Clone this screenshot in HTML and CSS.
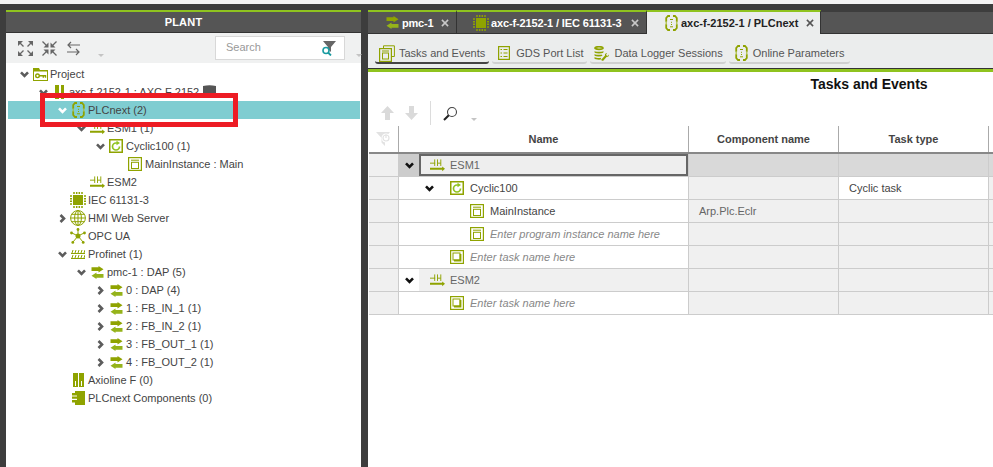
FILE: index.html
```html
<!DOCTYPE html>
<html lang="en">
<head>
<meta charset="utf-8">
<title>PLANT</title>
<link rel="stylesheet" href="styles.css">
</head>
<body>
<svg class="defs" aria-hidden="true">
  <defs>
    <symbol id="i-chev" viewBox="0 0 10 8"><path d="M1 1.500 5 5.500 9 1.500" fill="none" stroke="currentColor" stroke-width="3"/></symbol>
    <symbol id="i-right" viewBox="0 0 7 9"><path d="M1.500 1 5 4.500 1.500 8" fill="none" stroke="currentColor" stroke-width="2.600"/></symbol>
    <symbol id="i-project" viewBox="0 0 15 13"><path d="M0 0H6L7 2H15V13H0Z" fill="#8fa300"/><rect x="1" y="3.500" width="13" height="8.500" fill="#fff"/><circle cx="4.500" cy="7.800" r="1.800" fill="none" stroke="#8fa300" stroke-width="1.400"/><path d="M6 7.800H12.500V9.800M10.300 7.800V9.800" fill="none" stroke="#8fa300" stroke-width="1.400"/></symbol>
    <symbol id="i-rail" viewBox="0 0 9 14"><path d="M0 0H4V14H0ZM6 0H9.500V14H6Z" fill="#8fa300"/></symbol>
    <symbol id="i-device" viewBox="0 0 13 15"><path d="M0 1Q6.500 -.5 13 1V11Q6.500 15 0 11Z" fill="#555"/></symbol>
    <symbol id="i-plc" viewBox="0 0 13 16"><path d="M5 1H3L1.200 3V6.800M1.200 9.200V13L3 15H5M8 1H10L11.800 3V6.800M11.800 9.200V13L10 15H8" fill="none" stroke="#8fa300" stroke-width="1.800"/><path d="M1.200 6.500V9.500M11.800 6.500V9.500" stroke="#a9bb3a" stroke-width="1.200"/><path d="M5 4.500H8M6.500 6.800V7.800M6.500 9V10M5 11.800H8" fill="none" stroke="#8fa300" stroke-width="1"/></symbol>
    <symbol id="i-esm" viewBox="0 0 16 13"><path d="M0 4H5.500M8 4H11.500M5 0V7M8 0V7M11.500 0V7" fill="none" stroke="#8fa300" stroke-width="1"/><path d="M0 9H13V7.500L16 10 13 12.500V11H0Z" fill="#8fa300"/></symbol>
    <symbol id="i-cyclic" viewBox="0 0 14 14"><rect x=".75" y=".75" width="12.500" height="12.500" fill="#fff" stroke="#8fa300" stroke-width="1.500"/><path d="M10.500 7.500A3.500 3.500 0 1 1 7 4H8" fill="none" stroke="#8fc31f" stroke-width="1.700"/><path d="M7.500 1.800 11 4 7.500 6.300Z" fill="#8fc31f"/></symbol>
    <symbol id="i-prog" viewBox="0 0 14 14"><rect x=".6" y=".6" width="12.800" height="12.800" fill="none" stroke="#8fa300" stroke-width="1.200"/><path d="M3 3.200H11" stroke="#8fa300" stroke-width="1"/><rect x="3.500" y="5.300" width="7" height="6.200" fill="none" stroke="#8fa300" stroke-width="1"/></symbol>
    <symbol id="i-task" viewBox="0 0 14 14"><rect x=".6" y=".6" width="12.800" height="12.800" fill="none" stroke="#8fa300" stroke-width="1.200"/><rect x="3" y="3" width="7" height="7" fill="none" stroke="#8fa300" stroke-width="1"/><path d="M4 10.500H10.500V4" fill="none" stroke="#8fa300" stroke-width="1.800"/></symbol>
    <symbol id="i-chip" viewBox="0 0 16 16"><rect x="3" y="3" width="10" height="10" fill="#8fa300"/><path d="M4 0V2M6.700 0V2M9.300 0V2M12 0V2M4 14V16M6.700 14V16M9.300 14V16M12 14V16M0 4H2M0 6.700H2M0 9.300H2M0 12H2M14 4H16M14 6.700H16M14 9.300H16M14 12H16" stroke="#8fa300" stroke-width="1.500"/></symbol>
    <symbol id="i-globe" viewBox="0 0 16 16"><g fill="none" stroke="#8fa300" stroke-width="1"><circle cx="8" cy="8" r="7.400"/><ellipse cx="8" cy="8" rx="3.400" ry="7.400"/><path d="M8 .6V15.400M.6 8H15.400M1.800 4.300H14.200M1.800 11.700H14.200"/></g></symbol>
    <symbol id="i-opc" viewBox="0 0 16 16"><path d="M8 8 8 2M8 8 2 5M8 8 14 5M8 8 3 14M8 8 13 14" stroke="#8fa300" stroke-width="1"/><g fill="#8fa300"><circle cx="8" cy="8" r="2.500"/><circle cx="8" cy="1.500" r="1.400"/><circle cx="1.500" cy="5" r="1.400"/><circle cx="14.500" cy="5" r="1.400"/><circle cx="2.800" cy="14.400" r="1.400"/><circle cx="13.200" cy="14.400" r="1.400"/></g></symbol>
    <symbol id="i-prof" viewBox="0 0 14 9"><path d="M0 3.500H14M0 8.500H14" stroke="#8fa300" stroke-width="1"/><path d="M2 0 1 3M5 0 4 3M8 0 7 3M11 0 10 3M14 0 13 3M2 5 1 8M5 5 4 8M8 5 7 8M11 5 10 8M14 5 13 8" stroke="#8fa300" stroke-width="1"/></symbol>
    <symbol id="i-swap" viewBox="0 0 13 13"><path d="M.5 1.200H7.500V0L12.500 3.200 7.500 6.400V5H.5Z" fill="#8fa300"/><path d="M12.500 8H5.500V6.600L.5 9.800 5.500 13V11.800H12.500Z" fill="#95b31a"/></symbol>
    <symbol id="i-axio" viewBox="0 0 11 14"><path d="M0 0H5V14H0ZM6 0H11V14H6Z" fill="#8fa300"/><path d="M2.500 8V13M8.500 8V13" stroke="#fff" stroke-width="1"/></symbol>
    <symbol id="i-comp" viewBox="0 0 13 14"><path d="M3 0H13V14H3V11.500H0V9H5V7.700H0V5.500H5V4.500H0V2H3Z" fill="#8fa300"/></symbol>
    <symbol id="i-expand" viewBox="0 0 15 15"><path d="M0 0H5L0 5ZM15 0V5L10 0ZM0 15V10L5 15ZM15 15H10L15 10Z" fill="#666"/><path d="M1.500 1.500 5.500 5.500M13.500 1.500 9.500 5.500M1.500 13.500 5.500 9.500M13.500 13.500 9.500 9.500" stroke="#666" stroke-width="1.300"/></symbol>
    <symbol id="i-collapse" viewBox="0 0 15 15"><path d="M6.500 6.500H1.500L6.500 1.500ZM8.500 6.500V1.500L13.500 6.500ZM6.500 8.500V13.500L1.500 8.500ZM8.500 8.500H13.500L8.500 13.500Z" fill="#666"/><path d="M.5 .5 5 5M14.500 .5 10 5M.5 14.500 5 10M14.500 14.500 10 10" stroke="#666" stroke-width="1.300"/></symbol>
    <symbol id="i-swapgray" viewBox="0 0 15 15"><path d="M14 4H2M5 1 2 4 5 7M1 11H13M10 8 13 11 10 14" fill="none" stroke="#666" stroke-width="1.200"/></symbol>
    <symbol id="i-filter" viewBox="0 0 15 15"><path d="M2 0H15L10 6V11L7 8V6Z" fill="#666"/><circle cx="5" cy="9.500" r="3" fill="#fff" stroke="#1a9ba1" stroke-width="1.600"/><path d="M7 11.500 10 14.500" stroke="#1a9ba1" stroke-width="1.800"/></symbol>
    <symbol id="i-x" viewBox="0 0 9 9"><path d="M1 1 8 8M8 1 1 8" stroke="currentColor" stroke-width="1.700"/></symbol>
    <symbol id="i-tasks" viewBox="0 0 16 17"><path d="M4.500 3.500V.8H15.400V11.500H12.500" fill="none" stroke="#8fa300" stroke-width="1"/><rect x=".6" y="3.600" width="11.800" height="12.800" fill="#ebeded" stroke="#8fa300" stroke-width="1.200"/><path d="M3 6H10" stroke="#8fa300" stroke-width="1"/><rect x="3.500" y="8" width="6" height="6" fill="none" stroke="#8fa300" stroke-width="1"/></symbol>
    <symbol id="i-list" viewBox="0 0 12 14"><rect x=".6" y=".6" width="10.800" height="12.800" fill="none" stroke="#8fa300" stroke-width="1.200"/><path d="M2.500 3.500H4M5.500 3.500H9.500M2.500 7H4M5.500 7H9.500M2.500 10.500H4M5.500 10.500H9.500" stroke="#8fa300" stroke-width="1.200"/></symbol>
    <symbol id="i-data" viewBox="0 0 15 15"><g fill="none" stroke="#8fa300" stroke-width="1.700"><ellipse cx="5" cy="2" rx="4" ry="1.300"/><path d="M1 5.500C1 7 9 7 9 5.500M1 8.500C1 10 7 10 8 9M1 11.500C1 13 6 13 7 12.500"/></g><path d="M7 14 11 9.500Q10.500 7.500 13 7L12 9 13.500 10 15 8.500Q15 11 12.500 11L9 15Z" fill="#8fa300"/></symbol>
    <symbol id="i-up" viewBox="0 0 13 14"><path d="M6.500 0 13 7H9V14H4V7H0Z" fill="#dadada"/></symbol>
    <symbol id="i-down" viewBox="0 0 13 14"><path d="M6.500 14 13 7H9V0H4V7H0Z" fill="#dadada"/></symbol>
    <symbol id="i-mag" viewBox="0 0 15 15"><circle cx="9" cy="6" r="4.500" fill="none" stroke="#444" stroke-width="1.100"/><path d="M5.800 9.200 1 14" stroke="#222" stroke-width="2"/></symbol>
    <symbol id="i-filteroff" viewBox="0 0 15 15"><path d="M0 0H14L9 6V14L5.500 10.500V6Z" fill="#e2e2e2"/><circle cx="10" cy="6" r="4.500" fill="#fff"/><circle cx="10" cy="6" r="3" fill="none" stroke="#e2e2e2" stroke-width="1.200"/><path d="M10 2.500V6" stroke="#e2e2e2" stroke-width="1.200"/></symbol>
  </defs>
</svg>

<div class="topstrip"></div>
<div class="shell">
  <section class="plant">
    <h2 class="plant-head">PLANT</h2>
    <div class="plant-tools">
      <svg class="tool"><use href="#i-expand"/></svg>
      <svg class="tool"><use href="#i-collapse"/></svg>
      <svg class="tool"><use href="#i-swapgray"/></svg>
      <span class="caret caret-tools"></span>
      <div class="search"><span>Search</span><svg class="search-icon"><use href="#i-filter"/></svg></div>
      <span class="caret caret-end"></span>
    </div>
    <div class="tree">
      <div class="node l0"><svg class="chev"><use href="#i-chev"/></svg><span class="ic"><svg class="w15 h13"><use href="#i-project"/></svg></span><span>Project</span></div>
      <div class="node l1"><svg class="chev"><use href="#i-chev"/></svg><span class="ic"><svg class="w9 h14"><use href="#i-rail"/></svg></span><span>axc-f-2152-1 : AXC F 2152</span><svg class="device"><use href="#i-device"/></svg></div>
      <div class="node l2 selected"><svg class="chev"><use href="#i-chev"/></svg><span class="ic"><svg class="w13 h16"><use href="#i-plc"/></svg></span><span>PLCnext (2)</span></div>
      <div class="node l3"><svg class="chev"><use href="#i-chev"/></svg><span class="ic"><svg class="w15 h13"><use href="#i-esm"/></svg></span><span>ESM1 (1)</span></div>
      <div class="node l4"><svg class="chev"><use href="#i-chev"/></svg><span class="ic"><svg class="w14 h14"><use href="#i-cyclic"/></svg></span><span>Cyclic100 (1)</span></div>
      <div class="node l5"><span class="nochev"></span><span class="ic"><svg class="w14 h14"><use href="#i-prog"/></svg></span><span>MainInstance : Main</span></div>
      <div class="node l3"><span class="nochev"></span><span class="ic"><svg class="w15 h13"><use href="#i-esm"/></svg></span><span>ESM2</span></div>
      <div class="node l2"><span class="nochev"></span><span class="ic"><svg class="w16 h16"><use href="#i-chip"/></svg></span><span>IEC 61131-3</span></div>
      <div class="node l2"><svg class="chev chev-r"><use href="#i-right"/></svg><span class="ic"><svg class="w16 h16"><use href="#i-globe"/></svg></span><span>HMI Web Server</span></div>
      <div class="node l2"><span class="nochev"></span><span class="ic"><svg class="w16 h16"><use href="#i-opc"/></svg></span><span>OPC UA</span></div>
      <div class="node l2"><svg class="chev"><use href="#i-chev"/></svg><span class="ic"><svg class="w14 h9"><use href="#i-prof"/></svg></span><span>Profinet (1)</span></div>
      <div class="node l3"><svg class="chev"><use href="#i-chev"/></svg><span class="ic"><svg class="w13 h13"><use href="#i-swap"/></svg></span><span>pmc-1 : DAP (5)</span></div>
      <div class="node l4"><svg class="chev chev-r"><use href="#i-right"/></svg><span class="ic"><svg class="w13 h13"><use href="#i-swap"/></svg></span><span>0 : DAP (4)</span></div>
      <div class="node l4"><svg class="chev chev-r"><use href="#i-right"/></svg><span class="ic"><svg class="w13 h13"><use href="#i-swap"/></svg></span><span>1 : FB_IN_1 (1)</span></div>
      <div class="node l4"><svg class="chev chev-r"><use href="#i-right"/></svg><span class="ic"><svg class="w13 h13"><use href="#i-swap"/></svg></span><span>2 : FB_IN_2 (1)</span></div>
      <div class="node l4"><svg class="chev chev-r"><use href="#i-right"/></svg><span class="ic"><svg class="w13 h13"><use href="#i-swap"/></svg></span><span>3 : FB_OUT_1 (1)</span></div>
      <div class="node l4"><svg class="chev chev-r"><use href="#i-right"/></svg><span class="ic"><svg class="w13 h13"><use href="#i-swap"/></svg></span><span>4 : FB_OUT_2 (1)</span></div>
      <div class="node l2"><span class="nochev"></span><span class="ic"><svg class="w11 h14"><use href="#i-axio"/></svg></span><span>Axioline F (0)</span></div>
      <div class="node l2"><span class="nochev"></span><span class="ic"><svg class="w13 h14"><use href="#i-comp"/></svg></span><span>PLCnext Components (0)</span></div>
    </div>
    <div class="redbox"></div>
  </section>

  <section class="main">
    <div class="tabs">
      <div class="tab t1"><svg class="w13 h13"><use href="#i-swap"/></svg><span class="tab-label">pmc-1</span><svg class="tab-x"><use href="#i-x"/></svg></div>
      <div class="tab t2"><svg class="w16 h16"><use href="#i-chip"/></svg><span class="tab-label">axc-f-2152-1 / IEC 61131-3</span><svg class="tab-x"><use href="#i-x"/></svg></div>
      <div class="tab t3 active"><svg class="w13 h16"><use href="#i-plc"/></svg><span class="tab-label">axc-f-2152-1 / PLCnext</span><svg class="tab-x"><use href="#i-x"/></svg></div>
      <div class="tab-fill"></div>
    </div>
    <nav class="subtabs">
      <div class="subtab s1 current"><svg class="w16 h17"><use href="#i-tasks"/></svg><span>Tasks and Events</span></div>
      <div class="subtab s2"><svg class="w12 h14"><use href="#i-list"/></svg><span>GDS Port List</span></div>
      <div class="subtab s3"><svg class="w15 h15"><use href="#i-data"/></svg><span>Data Logger Sessions</span></div>
      <div class="subtab s4"><svg class="w13 h16"><use href="#i-plc"/></svg><span>Online Parameters</span></div>
    </nav>
    <div class="content">
      <h1 class="title">Tasks and Events</h1>
      <div class="grid-tools">
        <svg class="w13 h14"><use href="#i-up"/></svg>
        <svg class="w13 h14"><use href="#i-down"/></svg>
        <span class="sep"></span>
        <svg class="w15 h15"><use href="#i-mag"/></svg>
        <span class="caret caret-mag"></span>
      </div>
      <div class="grid">
        <div class="row head">
          <div class="cell gutter"><svg class="w15 h15"><use href="#i-filteroff"/></svg></div>
          <div class="cell name"><span>Name</span></div>
          <div class="cell comp"><span>Component name</span></div>
          <div class="cell type"><span>Task type</span></div>
          <div class="cell rest"></div>
        </div>
        <div class="row group focus">
          <div class="cell gutter"></div>
          <div class="cell name"><span class="gchev"><svg class="chev-b"><use href="#i-chev"/></svg></span><div class="focusbox"><svg class="w15 h13"><use href="#i-esm"/></svg><span>ESM1</span></div></div>
          <div class="cell comp"></div><div class="cell type"></div><div class="cell rest"></div>
        </div>
        <div class="row">
          <div class="cell gutter"></div>
          <div class="cell name lv1"><span class="gchev"><svg class="chev-b"><use href="#i-chev"/></svg></span><svg class="w14 h14 gic"><use href="#i-cyclic"/></svg><span>Cyclic100</span></div>
          <div class="cell comp"></div><div class="cell type white"><span>Cyclic task</span></div><div class="cell rest"></div>
        </div>
        <div class="row">
          <div class="cell gutter"></div>
          <div class="cell name lv2"><span class="gchev"></span><svg class="w14 h14 gic"><use href="#i-prog"/></svg><span>MainInstance</span></div>
          <div class="cell comp muted"><span>Arp.Plc.Eclr</span></div><div class="cell type"></div><div class="cell rest"></div>
        </div>
        <div class="row">
          <div class="cell gutter"></div>
          <div class="cell name lv2"><span class="gchev"></span><svg class="w14 h14 gic"><use href="#i-prog"/></svg><em>Enter program instance name here</em></div>
          <div class="cell comp"></div><div class="cell type"></div><div class="cell rest"></div>
        </div>
        <div class="row">
          <div class="cell gutter"></div>
          <div class="cell name lv1"><span class="gchev"></span><svg class="w14 h14 gic"><use href="#i-task"/></svg><em>Enter task name here</em></div>
          <div class="cell comp"></div><div class="cell type"></div><div class="cell rest"></div>
        </div>
        <div class="row group2">
          <div class="cell gutter"></div>
          <div class="cell name"><span class="gchev white"><svg class="chev-b"><use href="#i-chev"/></svg></span><div class="plainbox"><svg class="w15 h13"><use href="#i-esm"/></svg><span>ESM2</span></div></div>
          <div class="cell comp"></div><div class="cell type"></div><div class="cell rest"></div>
        </div>
        <div class="row">
          <div class="cell gutter"></div>
          <div class="cell name lv1"><span class="gchev"></span><svg class="w14 h14 gic"><use href="#i-task"/></svg><em>Enter task name here</em></div>
          <div class="cell comp"></div><div class="cell type"></div><div class="cell rest"></div>
        </div>
      </div>
    </div>
  </section>
</div>
</body>
</html>
```
FILE: styles.css
```css
* { box-sizing: border-box; }
html, body { margin: 0; height: 100%; overflow: hidden; }
body { font-family: "Liberation Sans", Arial, sans-serif; font-size: 11px; color: #444; background: #3d3d3d; }
svg { display: block; flex: none; }
.defs { position: absolute; width: 0; height: 0; }

.w9 { width: 9px; } .w11 { width: 11px; } .w12 { width: 12px; } .w13 { width: 13px; } .w14 { width: 14px; } .w15 { width: 15px; } .w16 { width: 16px; }
.h9 { height: 9px; } .h12 { height: 12px; } .h13 { height: 13px; } .h14 { height: 14px; } .h15 { height: 15px; } .h16 { height: 16px; } .h17 { height: 17px; }

.topstrip { height: 4px; background: #f4f4f4; }
.shell { display: flex; gap: 7px; height: 463px; padding: 6px 0 0 6px; }

/* Plant panel */
.plant { position: relative; width: 355px; flex: none; background: #fff; display: flex; flex-direction: column; border-top: 2px solid #8fc31f; }
.plant-head { margin: 0; height: 21px; background: #555; border-bottom: 1px solid #333; color: #fff; font-size: 11px; font-weight: bold; line-height: 20px; text-align: center; letter-spacing: .2px; }
.plant-tools { position: relative; height: 30px; background: #f0f1f1; display: flex; align-items: center; padding: 0 0 0 12px; gap: 9px; flex: none; }
.tool { width: 15px; height: 15px; }
.caret { position: absolute; width: 0; height: 0; border-left: 3px solid transparent; border-right: 3px solid transparent; border-top: 3px solid #c4c4c4; }
.caret-tools { left: 92px; top: 21px; }
.caret-end { left: 354px; top: 21px; margin-left: -4px; }
.caret-mag { left: 103px; top: 18px; }
.search { position: absolute; left: 209px; top: 3px; width: 130px; height: 24px; background: #fff; border: 1px solid #d8d8d8; display: flex; align-items: center; justify-content: space-between; padding: 0 8px 0 10px; color: #999; font-size: 11px; }
.search span { padding-bottom: 2px; }
.search-icon { width: 15px; height: 15px; }

.tree { flex: 1; padding-top: 2px; }
.node { height: 18px; display: flex; align-items: center; white-space: nowrap; line-height: 18px; }
.node.l0 { padding-left: 12px; }
.node.l1 { padding-left: 31px; }
.node.l2 { padding-left: 50px; }
.node.l3 { padding-left: 69px; }
.node.l4 { padding-left: 88px; }
.node.l5 { padding-left: 107px; }
.node.selected { background: #7fcdd1; margin: 0 1px 0 2px; padding-left: 48px; }
.chev { width: 9px; height: 7px; color: #5c5c5c; margin: 0 2px; }
.chev-r { width: 7px; height: 9px; margin: 0 3px; }
.nochev { width: 13px; flex: none; }
.selected .chev { color: #fff; }
.ic { width: 18px; height: 16px; display: flex; align-items: center; justify-content: center; margin-right: 1px; flex: none; }
.device { width: 13px; height: 15px; margin-left: 4px; }
.redbox { position: absolute; left: 34px; top: 81px; width: 198px; height: 34px; border: 5px solid #ed1c24; }

/* Main */
.main { flex: 1; min-width: 0; display: flex; flex-direction: column; background: #fff; }
.tabs { display: flex; height: 24px; flex: none; background: #555; }
.tab { height: 24px; display: flex; align-items: center; background: #555; border-top: 2px solid #8fc31f; border-right: 1px solid #333; border-bottom: 1px solid #333; color: #fff; font-weight: bold; font-size: 11px; flex: none; }
.tab-label { white-space: nowrap; }
.tab-x { width: 8px; height: 8px; color: #c8c8c8; }
.tab.t1 { width: 89px; padding-left: 18px; }
.tab.t1 .tab-label { margin: 0 9px 0 3px; width: 30px; letter-spacing: -.2px; }
.tab.t2 { width: 190px; padding-left: 16px; }
.tab.t2 .tab-label { margin: 0 9px 0 2px; width: 131px; letter-spacing: -.13px; }
.tab.t3 { width: 174px; padding-left: 18px; background: #ebeded; color: #222; border-bottom: 0; }
.tab.t3 .tab-label { margin: 0 8px 0 3px; width: 117px; }
.tab.t3 .tab-x { color: #555; }
.tab-fill { flex: 1; border-top: 2px solid #3d3d3d; border-bottom: 1px solid #333; }

.subtabs { height: 38px; background: #ebeded; border-bottom: 3px solid #8fc31f; box-shadow: inset 0 -1px 0 #333; display: flex; gap: 3px; padding-left: 7px; flex: none; }
.subtab { height: 30px; display: flex; align-items: center; border-bottom: 2px solid #cfd0d0; border-radius: 0 0 3px 3px; color: #555; white-space: nowrap; padding-top: 10px; }
.subtab.current { border-bottom-color: #444; }
.s1 { gap: 4px; padding-left: 4px; padding-right: 4px; }
.s2 { gap: 6px; padding-left: 6px; padding-right: 4px; }
.s3 { gap: 5px; padding-left: 4px; padding-right: 3px; }
.s4 { gap: 5px; padding-left: 6px; padding-right: 6px; }

.content { flex: 1; position: relative; }
.title { margin: 0; font-size: 14px; font-weight: bold; color: #111; text-align: center; padding-left: 377px; height: 28px; line-height: 24px; }
.grid-tools { position: relative; height: 26px; display: flex; align-items: center; padding-left: 13px; gap: 11px; }
.sep { width: 1px; height: 24px; background: #dcdcdc; margin-left: 1px; margin-right: 1px; }
.grid { margin-left: 1px; }
.row { display: flex; height: 23px; border-bottom: 1px solid #ccc; }
.cell { height: 100%; display: flex; align-items: center; border-right: 1px solid #ccc; background: #f0f0f0; flex: none; }
.cell.gutter { width: 30px; }
.cell.name { width: 290px; background: #fff; }
.cell.comp { width: 150px; padding-left: 10px; }
.cell.type { width: 150px; padding-left: 10px; }
.cell.rest { width: 4px; border-right: 0; }
.cell.white { background: #fff; }
.muted { color: #666; }
.head { height: 28px; border-bottom: 2px solid #888; }
.head .cell { background: #fff; border-right-color: #aaa; justify-content: center; padding: 0; font-weight: bold; color: #444; }
.head .rest { border: 0; }
.group .cell.comp, .group .cell.type, .group .cell.rest { background: #d9d9d9; }
.gchev { width: 20px; height: 100%; display: flex; align-items: center; justify-content: center; flex: none; }
.group .gchev { background: #ccc; }
.chev-b { width: 9px; height: 7px; color: #111; }
.focusbox { flex: 1; height: 100%; display: flex; align-items: center; gap: 5px; padding-left: 9px; background: #eee; border: 2px solid #666; color: #666; }
.plainbox { flex: 1; height: 100%; display: flex; align-items: center; gap: 5px; padding-left: 11px; background: #f0f0f0; color: #666; }
.lv1 { padding-left: 20px; }
.lv2 { padding-left: 40px; }
.gic { margin: 0 6px 0 11px; }
.cell em { color: #888; font-style: italic; }
```
